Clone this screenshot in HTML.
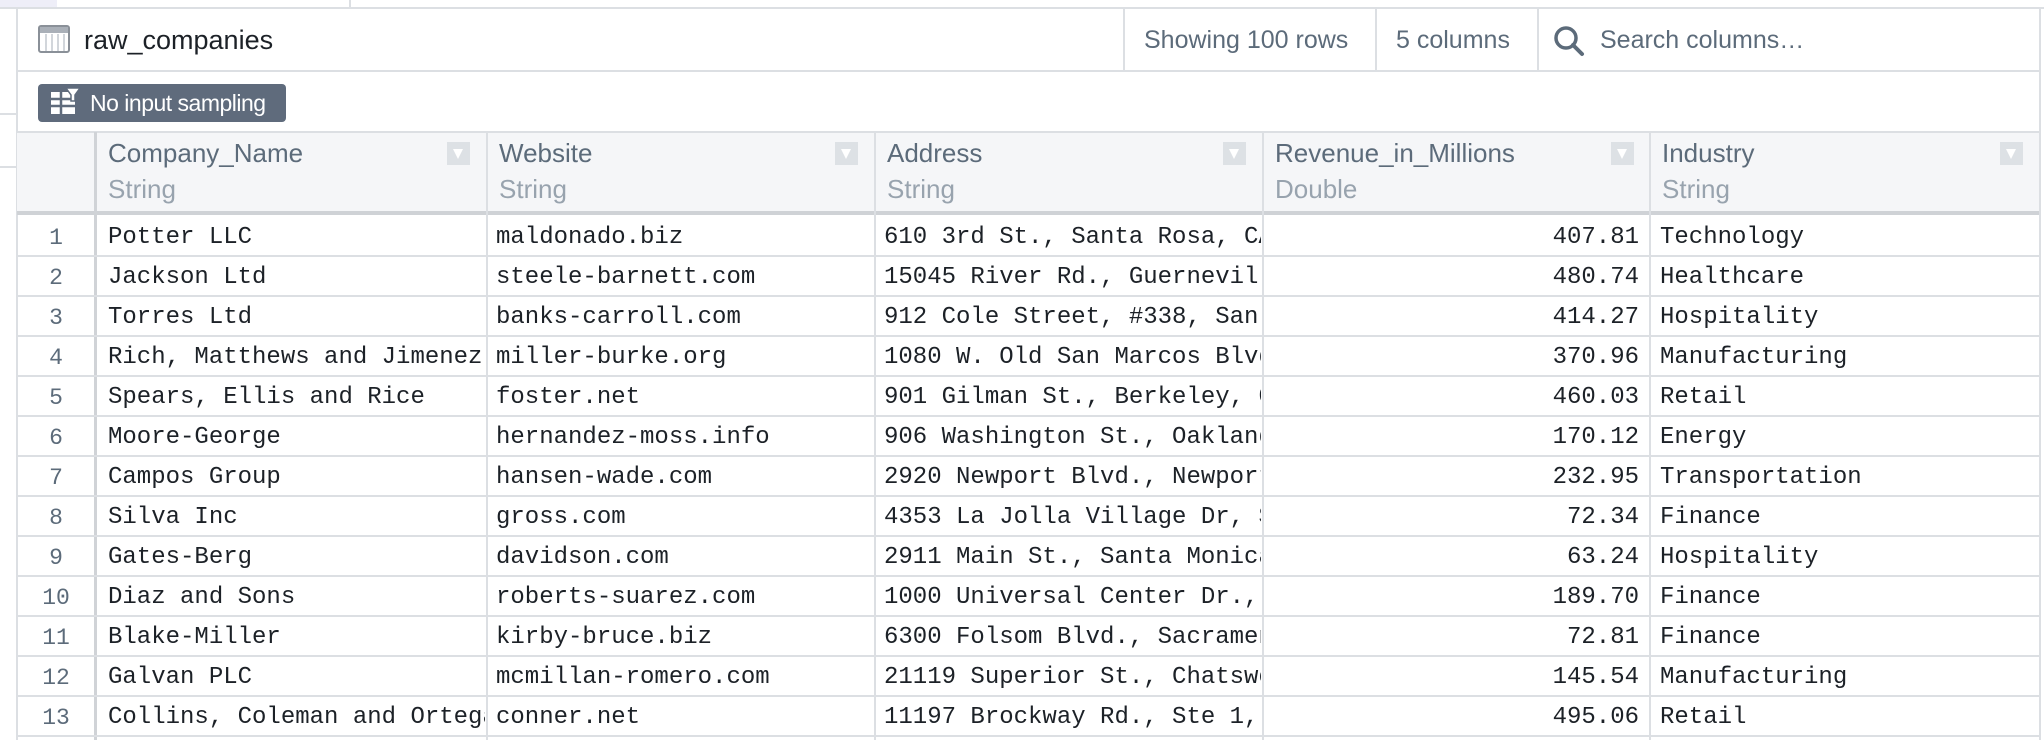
<!DOCTYPE html>
<html><head><style>
*{margin:0;padding:0;box-sizing:border-box}
html,body{width:2044px;height:740px;overflow:hidden}
body{background:#fff;position:relative;font-family:"Liberation Sans",sans-serif}
.a{position:absolute}
.hl{position:absolute;height:2px;background:#dcdfe3}
.vl{position:absolute;width:2px;background:#dcdfe3}
.sans{font-family:"Liberation Sans",sans-serif;color:#5c6b7a;font-size:25px;white-space:nowrap}
.cell{position:absolute;height:40px;line-height:40px;font-family:"Liberation Mono",monospace;font-size:24px;color:#1c2127;white-space:nowrap;overflow:hidden}
.num{position:absolute;width:78px;left:17px;text-align:center;height:40px;line-height:40px;font-family:"Liberation Mono",monospace;font-size:23px;color:#5c6b7a}
.hdr{position:absolute;top:134px;height:78px}
.hn{position:absolute;left:12px;top:4px;font-size:26px;color:#5c6b7a;white-space:nowrap}
.ht{position:absolute;left:12px;top:40px;font-size:26px;color:#98a3ae}
.fi{position:absolute;top:8px;width:23px;height:23px;background:#dde1e5}
.fi:after{content:"";position:absolute;left:6px;top:7px;border-left:5.5px solid transparent;border-right:5.5px solid transparent;border-top:10px solid #fff}
</style></head><body>
<div class="a" style="left:0;top:0;width:57px;height:7px;background:#eeeef8"></div>
<div class="hl" style="left:0;top:7px;width:2044px"></div>
<div class="vl" style="left:349px;top:0;height:7px"></div>
<div class="vl" style="left:16px;top:7px;height:733px"></div>
<div class="hl" style="left:0;top:113px;width:16px"></div>
<div class="hl" style="left:0;top:166px;width:16px"></div>
<div class="vl" style="left:2039px;top:7px;height:733px"></div>
<svg class="a" style="left:38px;top:25px" width="32" height="28" viewBox="0 0 32 28"><rect x="1" y="1" width="30" height="26" rx="2" fill="#fff" stroke="#8a9098" stroke-width="2"/><rect x="2" y="2" width="28" height="6" fill="#aab0b8"/><path d="M8 9v17M14 9v17M20 9v17M26 9v17" stroke="#c4c9cf" stroke-width="1.5"/></svg>
<div class="a" style="left:84px;top:25px;font-size:27px;color:#1c2127">raw_companies</div>
<div class="vl" style="left:1123px;top:7px;height:63px"></div>
<div class="vl" style="left:1375px;top:7px;height:63px"></div>
<div class="vl" style="left:1537px;top:7px;height:63px"></div>
<div class="a sans" style="left:1144px;top:26px">Showing 100 rows</div>
<div class="a sans" style="left:1396px;top:26px">5 columns</div>
<svg class="a" style="left:1552px;top:24px" width="34" height="34" viewBox="0 0 34 34"><circle cx="14" cy="14" r="10" fill="none" stroke="#5c6b7a" stroke-width="3.5"/><path d="M21 21l9 9" stroke="#5c6b7a" stroke-width="4" stroke-linecap="round"/></svg>
<div class="a sans" style="left:1600px;top:26px">Search columns…</div>
<div class="hl" style="left:17px;top:70px;width:2022px"></div>
<div class="a" style="left:38px;top:84px;width:248px;height:38px;background:#5f6b7c;border-radius:4px"></div>
<svg class="a" style="left:49px;top:86px" width="34" height="32" viewBox="0 0 34 32"><rect x="2" y="6" width="24" height="22" fill="#fff"/><path d="M2 13h24M2 20h24M12 6v22" stroke="#5f6b7c" stroke-width="2.5"/><path d="M17 2h14l-5 7v6h-4V9z" fill="#fff" stroke="#5f6b7c" stroke-width="1.5"/></svg>
<div class="a" style="left:90px;top:90px;font-size:23px;color:#fff;letter-spacing:-0.5px">No input sampling</div>
<div class="a" style="left:17px;top:132px;width:2022px;height:80px;background:#f5f6f8"></div>
<div class="hl" style="left:17px;top:131px;width:2022px"></div>
<div class="a" style="left:17px;top:211px;width:2022px;height:4px;background:#cfd2d6"></div>
<div class="a" style="left:94px;top:132px;width:3px;height:608px;background:#d0d3d7"></div>
<div class="hdr" style="left:96px;width:391px"><div class="hn">Company_Name</div><div class="ht">String</div><div class="fi" style="left:351px"></div></div>
<div class="hdr" style="left:487px;width:388px"><div class="hn">Website</div><div class="ht">String</div><div class="fi" style="left:348px"></div></div>
<div class="hdr" style="left:875px;width:388px"><div class="hn">Address</div><div class="ht">String</div><div class="fi" style="left:348px"></div></div>
<div class="hdr" style="left:1263px;width:387px"><div class="hn">Revenue_in_Millions</div><div class="ht">Double</div><div class="fi" style="left:348px"></div></div>
<div class="hdr" style="left:1650px;width:389px"><div class="hn">Industry</div><div class="ht">String</div><div class="fi" style="left:350px"></div></div>
<div class="vl" style="left:486px;top:132px;height:608px"></div>
<div class="vl" style="left:874px;top:132px;height:608px"></div>
<div class="vl" style="left:1262px;top:132px;height:608px"></div>
<div class="vl" style="left:1649px;top:132px;height:608px"></div>
<div id="rows"></div>
<script>
var d=[["Potter LLC","maldonado.biz","610 3rd St., Santa Rosa, CA","407.81","Technology"],
["Jackson Ltd","steele-barnett.com","15045 River Rd., Guerneville","480.74","Healthcare"],
["Torres Ltd","banks-carroll.com","912 Cole Street, #338, San","414.27","Hospitality"],
["Rich, Matthews and Jimenez","miller-burke.org","1080 W. Old San Marcos Blvd","370.96","Manufacturing"],
["Spears, Ellis and Rice","foster.net","901 Gilman St., Berkeley, CA","460.03","Retail"],
["Moore-George","hernandez-moss.info","906 Washington St., Oakland","170.12","Energy"],
["Campos Group","hansen-wade.com","2920 Newport Blvd., Newport","232.95","Transportation"],
["Silva Inc","gross.com","4353 La Jolla Village Dr, San","72.34","Finance"],
["Gates-Berg","davidson.com","2911 Main St., Santa Monica","63.24","Hospitality"],
["Diaz and Sons","roberts-suarez.com","1000 Universal Center Dr.,","189.70","Finance"],
["Blake-Miller","kirby-bruce.biz","6300 Folsom Blvd., Sacramento","72.81","Finance"],
["Galvan PLC","mcmillan-romero.com","21119 Superior St., Chatsworth","145.54","Manufacturing"],
["Collins, Coleman and Ortega","conner.net","11197 Brockway Rd., Ste 1,","495.06","Retail"]];
var h="";
for(var i=0;i<14;i++){var t=218+40*i;
h+='<div class="hl" style="left:17px;top:'+(t+37)+'px;width:2022px"></div>';
if(i<13){var r=d[i];
h+='<div class="num" style="top:'+t+'px">'+(i+1)+'</div>';
h+='<div class="cell" style="left:108px;top:'+t+'px;width:377px">'+r[0]+'</div>';
h+='<div class="cell" style="left:496px;top:'+t+'px;width:377px">'+r[1]+'</div>';
h+='<div class="cell" style="left:884px;top:'+t+'px;width:377px">'+r[2]+'</div>';
h+='<div class="cell" style="left:1265px;top:'+t+'px;width:374px;text-align:right">'+r[3]+'</div>';
h+='<div class="cell" style="left:1660px;top:'+t+'px;width:375px">'+r[4]+'</div>';}}
document.getElementById("rows").innerHTML=h;
</script>
</body></html>
